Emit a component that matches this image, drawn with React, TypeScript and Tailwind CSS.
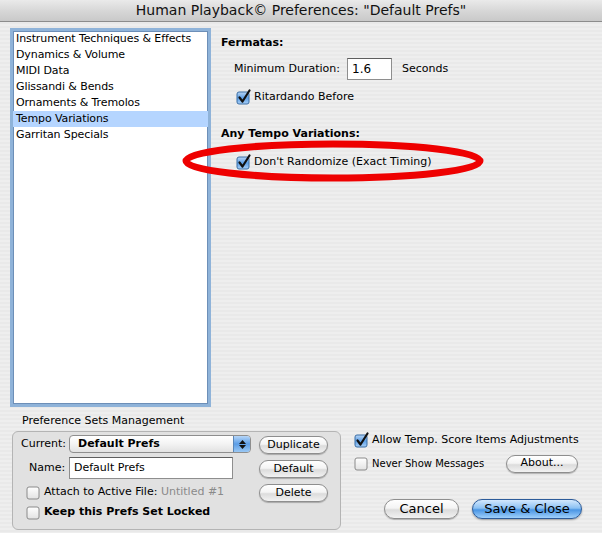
import React from "react";

const font = "font-['DejaVu_Sans','Liberation_Sans',sans-serif]";

const Check: React.FC<{ checked?: boolean }> = ({ checked }) => (
  <svg width="15" height="15" viewBox="0 0 15 15" className="shrink-0 overflow-visible">
    <defs>
      <linearGradient id="cbBlue" x1="0" y1="0" x2="0" y2="1">
        <stop offset="0" stopColor="#b9d6f5" />
        <stop offset="0.5" stopColor="#5d9fe6" />
        <stop offset="1" stopColor="#a9d0f7" />
      </linearGradient>
      <linearGradient id="cbWhite" x1="0" y1="0" x2="0" y2="1">
        <stop offset="0" stopColor="#ffffff" />
        <stop offset="1" stopColor="#e2e2e2" />
      </linearGradient>
    </defs>
    <rect
      x="1"
      y="2"
      width="12"
      height="12"
      rx="2"
      fill={checked ? "url(#cbBlue)" : "url(#cbWhite)"}
      stroke={checked ? "#3b6ea5" : "#8a8a8a"}
      strokeWidth="1"
    />
    {checked && (
      <path
        d="M3.5 7.5 L6.5 11.5 L13.5 0.5"
        fill="none"
        stroke="#111"
        strokeWidth="2.2"
        strokeLinecap="round"
        strokeLinejoin="round"
      />
    )}
  </svg>
);

const AquaButton: React.FC<{ label: string; className?: string }> = ({ label, className }) => (
  <div
    className={`flex items-center justify-center rounded-full border border-[#8e8e8e] bg-[linear-gradient(180deg,#ffffff_0%,#f4f4f4_45%,#dcdcdc_55%,#f2f2f2_100%)] shadow-[0_1px_1px_rgba(0,0,0,0.25)] text-black ${className ?? ""}`}
  >
    {label}
  </div>
);

const items = [
  "Instrument Techniques & Effects",
  "Dynamics & Volume",
  "MIDI Data",
  "Glissandi & Bends",
  "Ornaments & Tremolos",
  "Tempo Variations",
  "Garritan Specials",
];

export default function App() {
  return (
    <div
      className={`${font} relative w-[602px] h-[533px] overflow-hidden flex flex-col text-[11px] text-black bg-[repeating-linear-gradient(180deg,#eeeeee_0px,#eeeeee_2px,#e9e9e9_2px,#e9e9e9_4px)]`}
    >
      {/* title bar */}
      <div className="h-[22px] shrink-0 flex items-center justify-center border-b border-[#8c8c8c] bg-[linear-gradient(180deg,#eaeaea_0%,#d6d6d6_55%,#c9c9c9_100%)] text-[14px] text-[#111]">
        Human Playback© Preferences: "Default Prefs"
      </div>

      {/* main */}
      <div className="flex pt-[6px] pl-[10px]">
        <div className="w-[201px] h-[379px] bg-white border-[3px] border-[#8fb3d9] shadow-[inset_0_0_0_1px_#6d8fb8] tracking-[-0.1px]">
          {items.map((it) => (
            <div
              key={it}
              className={`h-[16px] leading-[16px] pl-[3px] ${it === "Tempo Variations" ? "bg-[#b5d5ff]" : ""}`}
            >
              {it}
            </div>
          ))}
        </div>

        <div className="flex flex-col pl-[10px] pt-[6px]">
          <div className="font-bold h-[18px] leading-[18px]">Fermatas:</div>
          <div className="flex items-center pl-[13px] mt-[6px] h-[22px]">
            <span className="w-[113px]">Minimum Duration:</span>
            <div className="w-[45px] h-[22px] bg-white border border-[#8e8e8e] border-t-[#5e5e5e] pl-[4px] leading-[20px] text-[12px]">
              1.6
            </div>
            <span className="ml-[10px]">Seconds</span>
          </div>
          <div className="flex items-center gap-[3px] pl-[15px] mt-[9px] h-[16px]">
            <Check checked />
            <span>Ritardando Before</span>
          </div>
          <div className="font-bold h-[18px] leading-[18px] mt-[20px]">Any Tempo Variations:</div>
          <div className="flex items-center gap-[3px] pl-[15px] mt-[11px] h-[16px]">
            <Check checked />
            <span>Don't Randomize (Exact Timing)</span>
          </div>
        </div>
      </div>

      {/* red annotation ellipse */}
      <svg className="absolute left-[180px] top-[140px]" width="308" height="44" viewBox="0 0 308 44">
        <ellipse cx="153" cy="21" rx="147" ry="17" fill="none" stroke="#ee0000" strokeWidth="7" />
      </svg>

      {/* bottom */}
      <div className="flex mt-[6px]">
        <div className="flex flex-col pl-[12px]">
          <div className="pl-[10px] h-[16px] leading-[16px]">Preference Sets Management</div>
          <div className="w-[329px] h-[99px] mt-[2px] rounded-[6px] border border-[#b4b4b4] bg-[#e1e1e1] px-[8px] pt-[3px] flex gap-[8px]">
            <div className="flex flex-col w-[230px]">
              <div className="flex items-center h-[18px]">
                <span className="w-[48px]">Current:</span>
                <div className="flex-1 h-[18px] flex rounded-[4px] border border-[#8e8e8e] bg-[linear-gradient(180deg,#ffffff_0%,#f3f3f3_50%,#e2e2e2_100%)] overflow-hidden">
                  <span className="flex-1 pl-[8px] font-bold leading-[16px]">Default Prefs</span>
                  <div className="w-[17px] flex flex-col items-center justify-center gap-[1px] bg-[linear-gradient(180deg,#b6d6f8_0%,#5b9de6_50%,#9ac8f4_100%)] border-l border-[#5a86b8]">
                    <svg width="7" height="4" viewBox="0 0 7 4"><path d="M0 4 L3.5 0 L7 4Z" fill="#111" /></svg>
                    <svg width="7" height="4" viewBox="0 0 7 4"><path d="M0 0 L3.5 4 L7 0Z" fill="#111" /></svg>
                  </div>
                </div>
              </div>
              <div className="flex items-center h-[22px] mt-[4px]">
                <span className="w-[48px] pl-[8px]">Name:</span>
                <div className="w-[164px] h-[22px] bg-white border border-[#8e8e8e] border-t-[#5e5e5e] pl-[4px] leading-[20px]">
                  Default Prefs
                </div>
              </div>
              <div className="flex items-center gap-[3px] pl-[5px] mt-[5px] h-[16px]">
                <Check />
                <span>
                  Attach to Active File: <span className="text-[#8a8a8a]">Untitled #1</span>
                </span>
              </div>
              <div className="flex items-center gap-[3px] pl-[5px] mt-[4px] h-[16px]">
                <Check />
                <span className="font-bold">Keep this Prefs Set Locked</span>
              </div>
            </div>
            <div className="flex flex-col gap-[6px] pt-[1px]">
              <AquaButton label="Duplicate" className="w-[69px] h-[18px]" />
              <AquaButton label="Default" className="w-[69px] h-[18px]" />
              <AquaButton label="Delete" className="w-[69px] h-[18px]" />
            </div>
          </div>
        </div>

        <div className="flex flex-col pl-[13px] pt-[19px]">
          <div className="flex items-center gap-[3px] h-[16px]">
            <Check checked />
            <span>Allow Temp. Score Items Adjustments</span>
          </div>
          <div className="flex items-center h-[19px] mt-[6px]">
            <div className="flex items-center gap-[3px] w-[152px]">
              <Check />
              <span className="text-[10px]">Never Show Messages</span>
            </div>
            <AquaButton label="About..." className="w-[72px] h-[18px]" />
          </div>
          <div className="flex items-center mt-[26px] pl-[30px] gap-[13px] text-[13px]">
            <AquaButton label="Cancel" className="w-[75px] h-[20px]" />
            <div className="w-[110px] h-[20px] flex items-center justify-center rounded-full border border-[#2c5b9a] bg-[linear-gradient(180deg,#d3e8fd_0%,#8cc1f3_45%,#4a95e4_55%,#9fd0fb_100%)] shadow-[0_1px_2px_rgba(0,0,0,0.35)]">
              Save &amp; Close
            </div>
          </div>
        </div>
      </div>
    </div>
  );
}
